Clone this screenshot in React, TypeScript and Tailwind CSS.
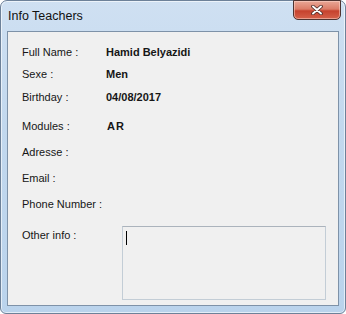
import React from "react";

// Windows 7 style "Info Teachers" dialog: aero frame, caption with close
// button, and a grey client area listing the teacher's fields.

type Row = { label: string; value?: string; gap: string };

const rows: Row[] = [
  { label: "Full Name :", value: "Hamid Belyazidi", gap: "mt-0" },
  { label: "Sexe :", value: "Men", gap: "mt-0" },
  { label: "Birthday :", value: "04/08/2017", gap: "mt-px" },
  { label: "Modules :", value: "AR", gap: "mt-[7px]" },
  { label: "Adresse :", gap: "mt-1" },
  { label: "Email :", gap: "mt-1" },
  { label: "Phone Number :", gap: "mt-1" },
];

export default function App() {
  return (
    <div className="relative h-[314px] w-[346px] overflow-hidden bg-white font-['Liberation_Sans',Arial,sans-serif]">
      <div className="flex h-full w-full flex-col rounded-t-[7px] rounded-b-[6px] border border-[#6d8199] bg-[linear-gradient(180deg,#cfe0f2_0%,#c2d8ee_40%,#bad3ec_100%)] shadow-[inset_0_0_0_1px_rgba(255,255,255,0.6)]">
        {/* Caption */}
        <div className="relative flex h-[30px] shrink-0 items-center pl-[7px]">
          <span className="text-[12.5px] leading-none text-[#111]">Info Teachers</span>
          <CloseButton />
        </div>

        {/* Client area */}
        <div className="mx-[6px] flex h-[275px] flex-col border border-[#7e92a8] bg-[#f0f0f0] pl-[14px] pt-[9px] text-[11px] text-[#161616]">
          {rows.map((r) => (
            <div key={r.label} className={`flex h-[22px] items-center ${r.gap}`}>
              <span className="w-[84px] shrink-0">{r.label}</span>
              {r.value && (
                <span className={`font-bold ${r.label === "Modules :" ? "ml-px tracking-[1px]" : ""}`}>
                  {r.value}
                </span>
              )}
            </div>
          ))}
          <div className="mt-[9px] flex items-start">
            <span className="flex h-[22px] w-[100px] shrink-0 items-center">Other info :</span>
            <div className="mt-[2px] h-[74px] w-[204px] border border-[#c3cdd6] border-t-[#abb3bc] bg-[#f0f0f0] pl-[3px] pt-[4px]">
              <div className="h-[14px] w-px bg-black" />
            </div>
          </div>
        </div>
      </div>
    </div>
  );
}

function CloseButton() {
  return (
    <div className="absolute right-[4px] top-[-1px] flex h-[20px] w-[48px] items-center justify-center rounded-b-[5px] border border-[#4f3431] bg-[linear-gradient(180deg,#e9a796_0%,#dc7d68_45%,#c6422e_55%,#d5614a_100%)] shadow-[inset_0_0_0_1px_rgba(255,220,210,0.5)]">
      <svg width="12" height="10" viewBox="0 0 12 10" aria-hidden="true">
        <path
          d="M2 1.5L10 8.5M10 1.5L2 8.5"
          stroke="#4a2a26"
          strokeWidth="3.6"
          strokeLinecap="round"
        />
        <path
          d="M2 1.5L10 8.5M10 1.5L2 8.5"
          stroke="#ffffff"
          strokeWidth="1.9"
          strokeLinecap="round"
        />
      </svg>
    </div>
  );
}
